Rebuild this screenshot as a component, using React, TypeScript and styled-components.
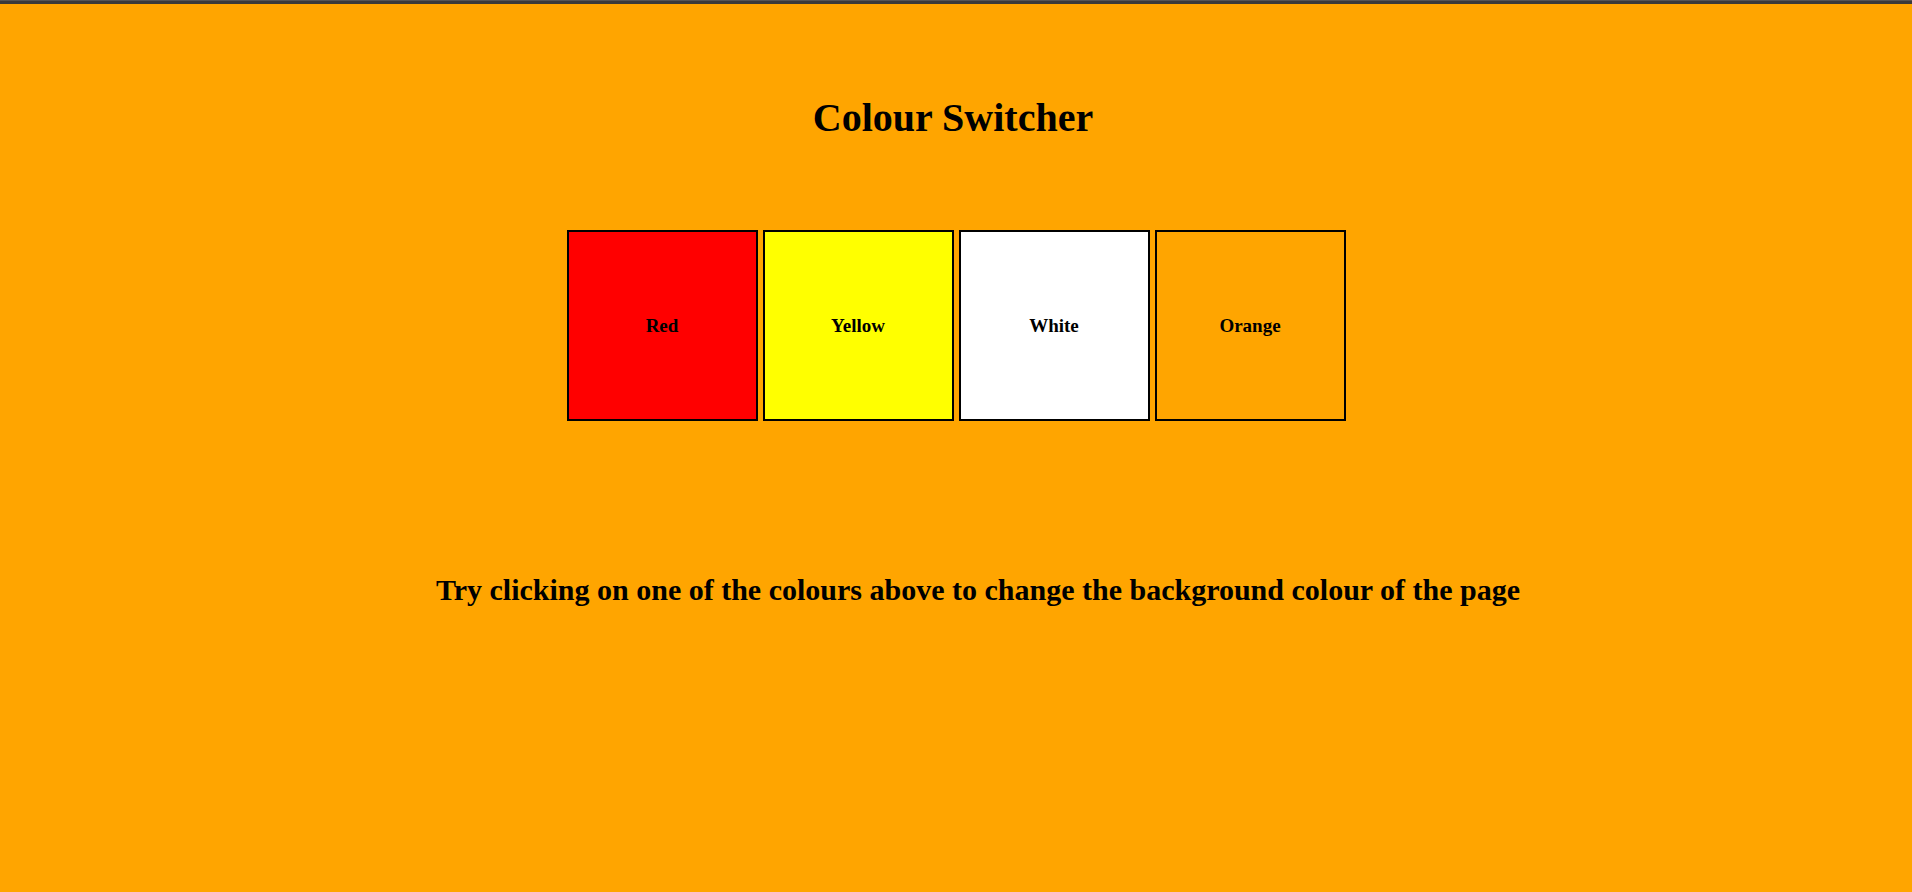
import React, { useState } from "react";
import styled, { createGlobalStyle } from "styled-components";

const Global = createGlobalStyle<{ $bg: string }>`
  html, body { margin: 0; padding: 0; }
  body {
    background: ${(p) => p.$bg};
    font-family: "Liberation Serif", "Times New Roman", serif;
    color: #000;
    min-height: 892px;
  }
`;

const Page = styled.div`
  min-height: 892px;
  box-sizing: border-box;
  border-top: 4px solid #3a3a3a;
  display: flex;
  flex-direction: column;
  align-items: center;
`;

const TopShade = styled.div`
  position: fixed;
  top: 0;
  left: 0;
  right: 0;
  height: 1px;
  background: #555;
`;

const Title = styled.h1`
  margin: 91px 0 0;
  padding-right: 6px;
  font-size: 40px;
  line-height: 46px;
  font-weight: bold;
`;

const Swatches = styled.div`
  display: flex;
  gap: 5px;
  margin-top: 89px;
`;

const Swatch = styled.button<{ $color: string }>`
  width: 191px;
  height: 191px;
  box-sizing: border-box;
  border: 2px solid #000;
  background: ${(p) => p.$color};
  display: flex;
  align-items: center;
  justify-content: center;
  font-family: "Liberation Serif", "Times New Roman", serif;
  font-weight: bold;
  font-size: 19px;
  color: #000;
  padding: 0;
  cursor: pointer;
`;

const Hint = styled.h2`
  margin: 152px 0 0;
  padding-left: 44px;
  font-size: 30px;
  line-height: 34px;
  font-weight: bold;
`;

const colours = [
  { name: "Red", value: "#ff0000" },
  { name: "Yellow", value: "#ffff00" },
  { name: "White", value: "#ffffff" },
  { name: "Orange", value: "#ffa500" },
];

export default function App() {
  const [bg, setBg] = useState("#ffa500");
  return (
    <>
      <Global $bg={bg} />
      <TopShade />
      <Page>
        <Title>Colour Switcher</Title>
        <Swatches>
          {colours.map((c) => (
            <Swatch key={c.name} $color={c.value} onClick={() => setBg(c.value)}>
              {c.name}
            </Swatch>
          ))}
        </Swatches>
        <Hint>Try clicking on one of the colours above to change the background colour of the page</Hint>
      </Page>
    </>
  );
}
